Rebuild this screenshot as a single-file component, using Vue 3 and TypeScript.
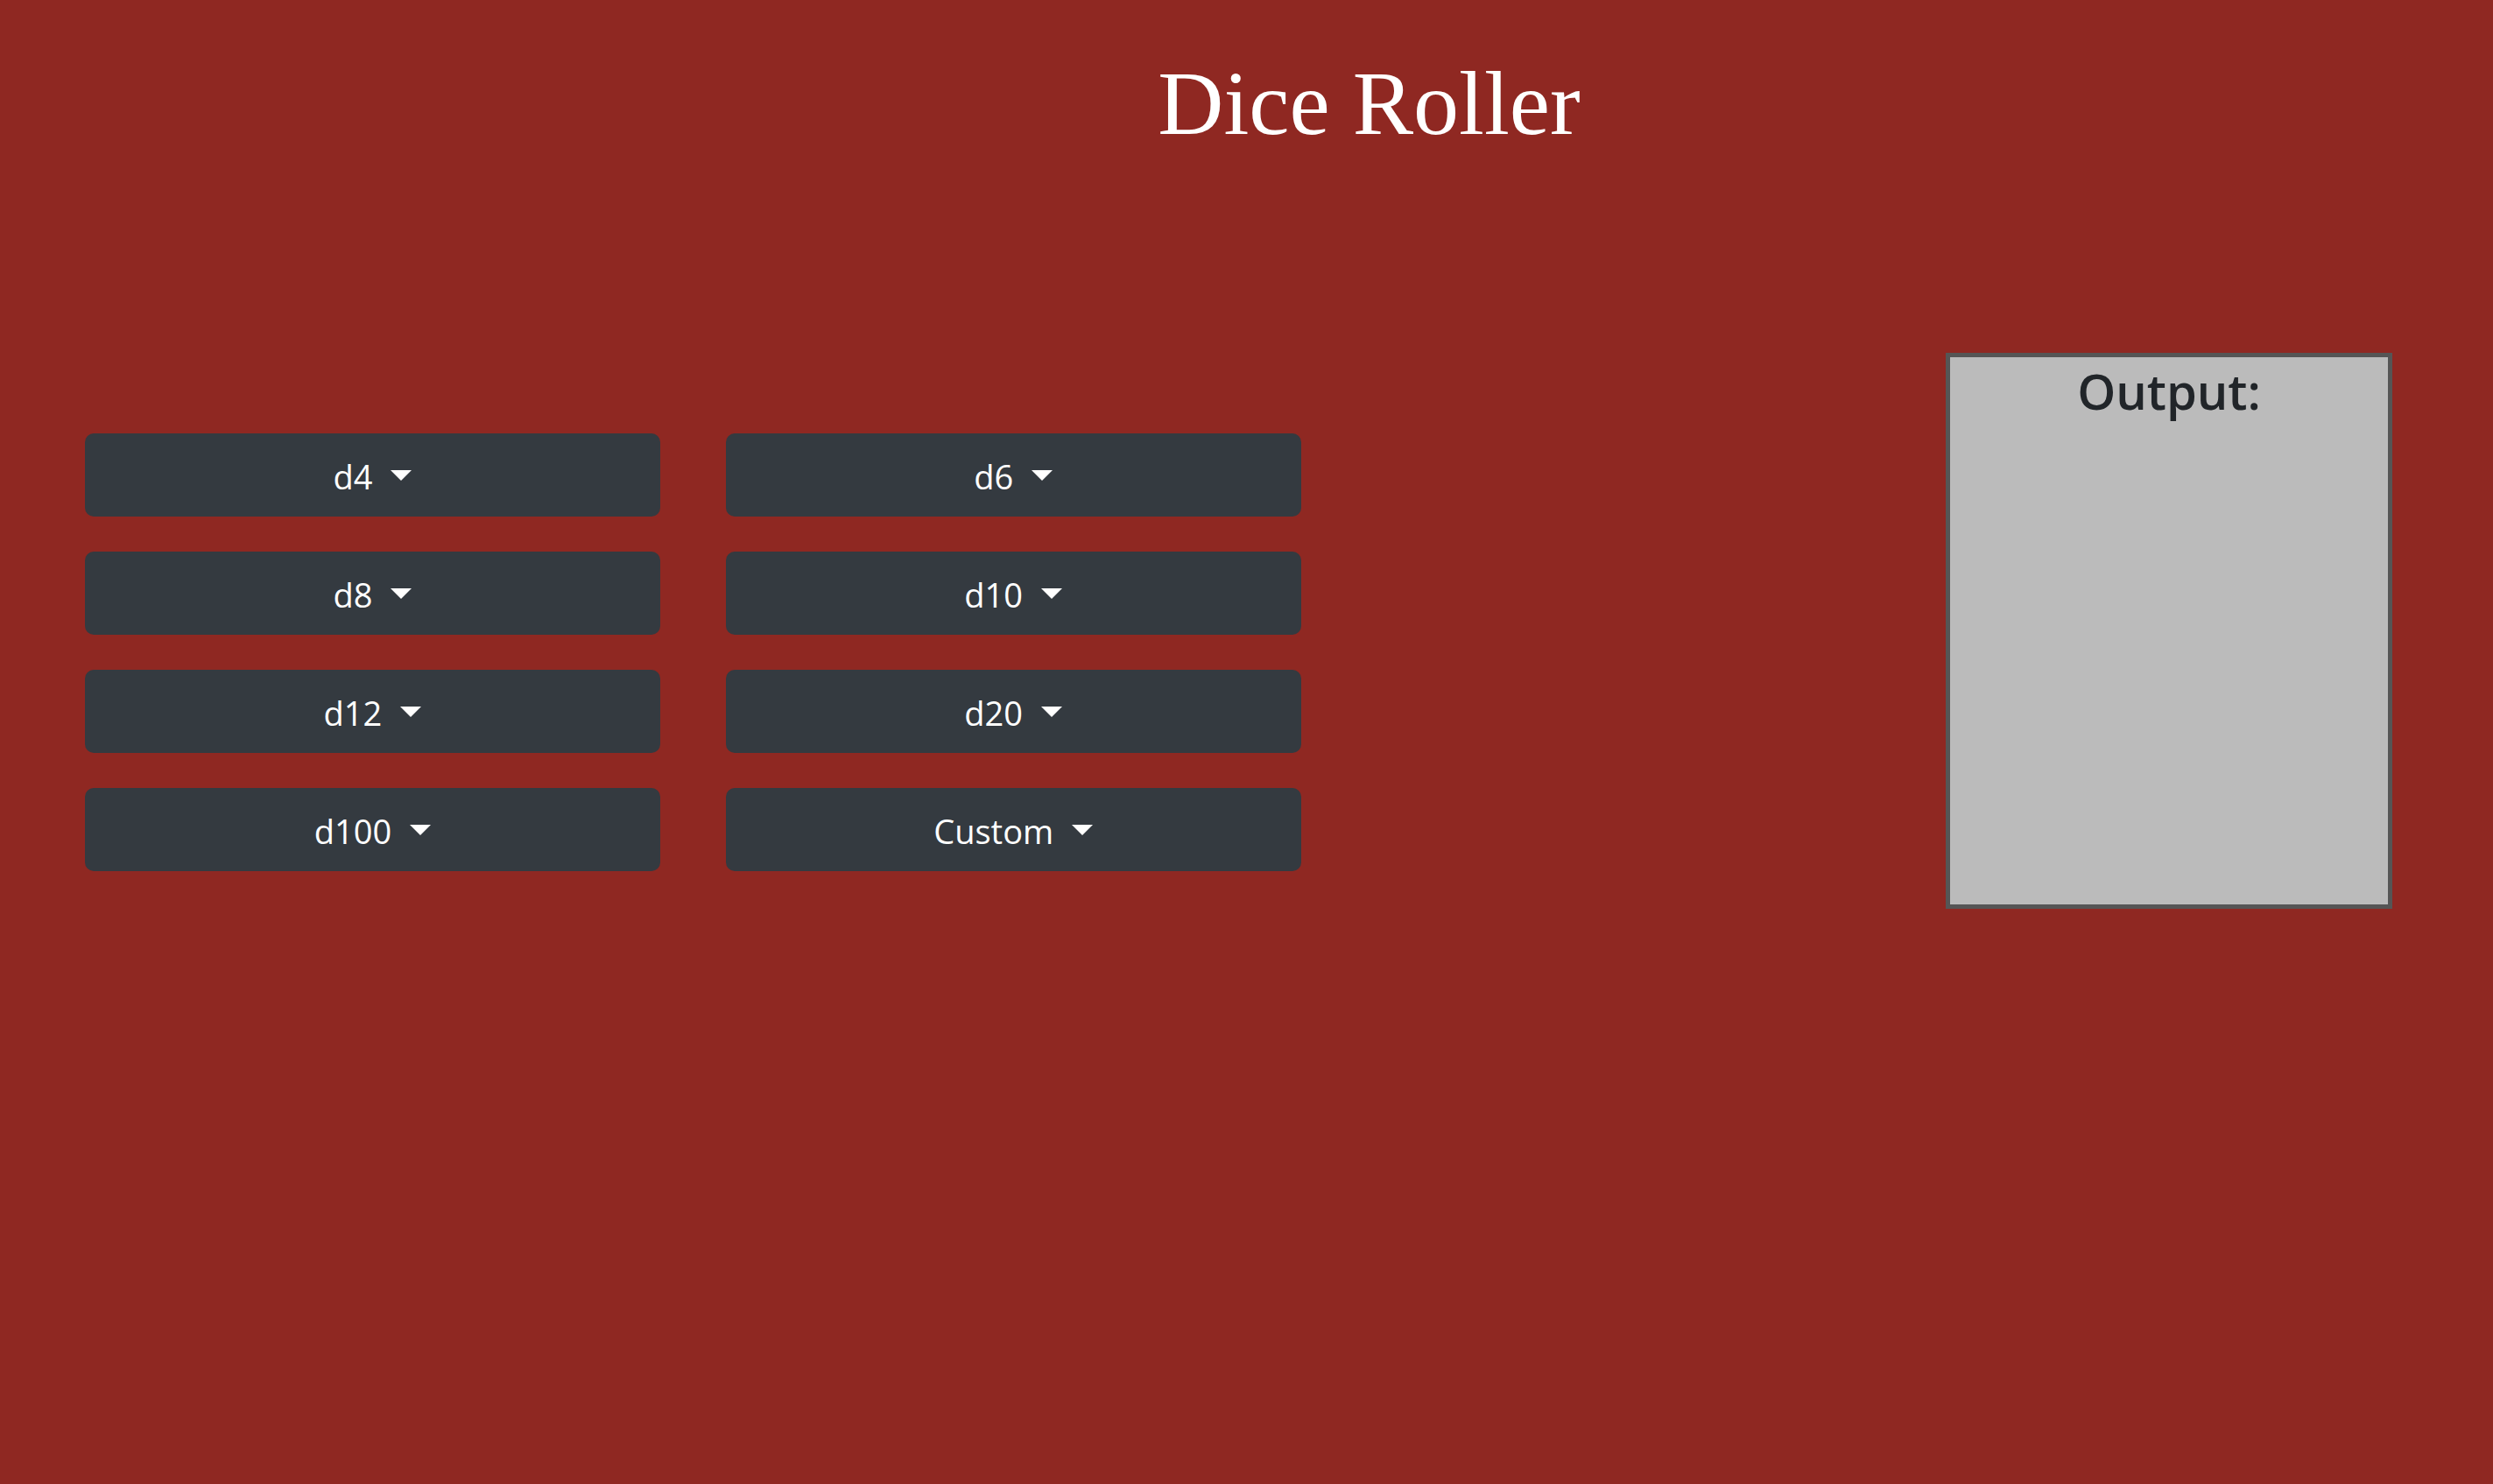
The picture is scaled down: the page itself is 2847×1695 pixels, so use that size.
<script setup lang="ts">
const dice: string[] = ['d4', 'd6', 'd8', 'd10', 'd12', 'd20', 'd100', 'Custom']
</script>

<template>
  <div class="page">
    <header class="header">
      <h1 class="title">Dice Roller</h1>
    </header>
    <main class="main">
      <div class="dice">
        <button v-for="die in dice" :key="die" type="button" class="die" aria-haspopup="true">
          <span class="label">{{ die }}</span>
          <span class="caret" aria-hidden="true"></span>
        </button>
      </div>
      <section class="output" aria-labelledby="output-title">
        <h2 id="output-title" class="output-title">Output:</h2>
      </section>
    </main>
  </div>
</template>

<style>
body {
  margin: 0;
  background: #8f2822;
}
</style>

<style scoped>
.page {
  box-sizing: border-box;
  min-height: 100vh;
  padding: 58px 115px 60px 97px;
  font-family: "Open Sans", "Noto Sans", sans-serif;
  background: #8f2822;
}

.header {
  padding-left: 298px;
  text-align: center;
}

.title {
  margin: 0;
  color: #fff;
  font-family: "Liberation Serif", serif;
  font-size: 104px;
  font-weight: 400;
  line-height: 120px;
}

.main {
  display: flex;
  align-items: flex-start;
  justify-content: space-between;
  gap: 40px;
  margin-top: 225px;
}

.dice {
  display: grid;
  grid-template-columns: 1fr 1fr;
  gap: 40px 75px;
  width: 52.7%;
  margin-top: 92px;
}

.die {
  display: flex;
  align-items: center;
  justify-content: center;
  gap: 21px;
  height: 95px;
  padding: 0 15px;
  border: 0;
  border-radius: 10px;
  color: #fff;
  background: #343a40;
  font-family: inherit;
  font-size: 38px;
  line-height: 60px;
  cursor: pointer;
}

.label {
  padding-top: 2px;
}

.caret {
  border-top: 12px solid #fff;
  border-right: 12px solid transparent;
  border-left: 12px solid transparent;
}

.output {
  box-sizing: border-box;
  width: 510px;
  min-height: 635px;
  padding-top: 2px;
  border: 5px solid #555;
  background: #bbb;
}

.output-title {
  margin: 0;
  color: #212529;
  font-size: 56px;
  font-weight: 600;
  line-height: 72px;
  text-align: center;
}
</style>
